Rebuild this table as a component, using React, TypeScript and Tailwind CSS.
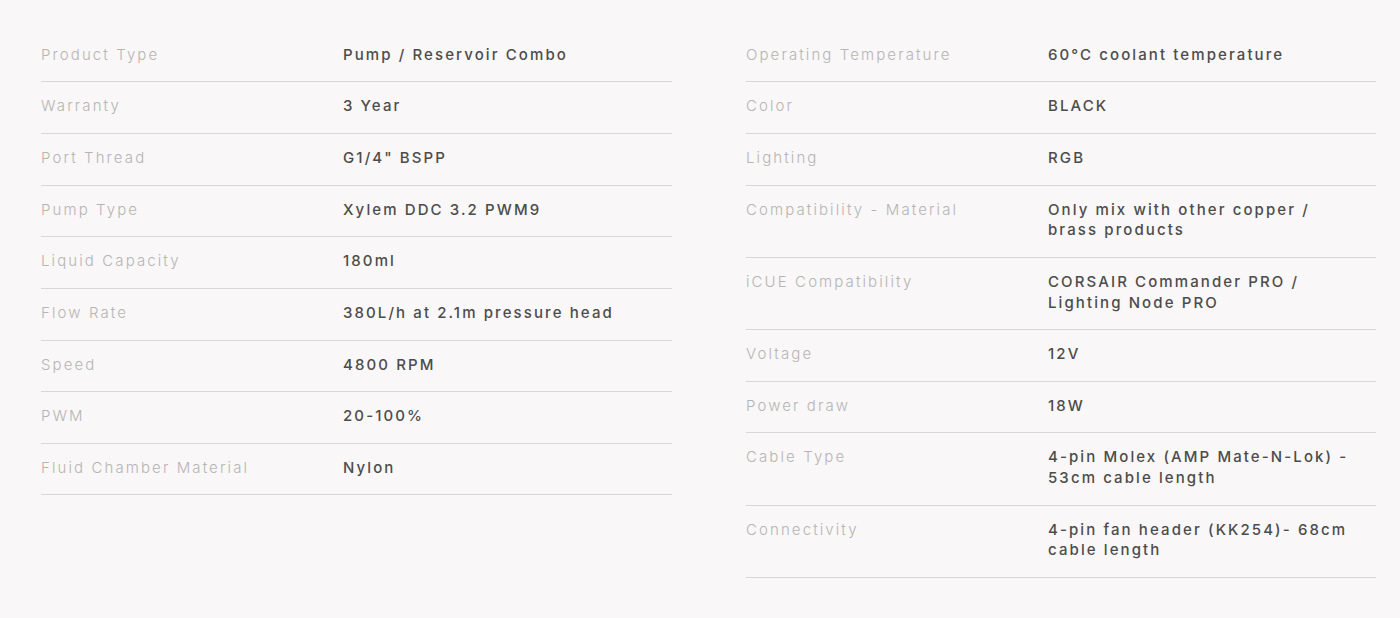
import React from 'react';

type Spec = {
  label: string;
  value: string;
};

const leftSpecs: Spec[] = [
  { label: 'Product Type', value: 'Pump / Reservoir Combo' },
  { label: 'Warranty', value: '3 Year' },
  { label: 'Port Thread', value: 'G1/4" BSPP' },
  { label: 'Pump Type', value: 'Xylem DDC 3.2 PWM9' },
  { label: 'Liquid Capacity', value: '180ml' },
  { label: 'Flow Rate', value: '380L/h at 2.1m pressure head' },
  { label: 'Speed', value: '4800 RPM' },
  { label: 'PWM', value: '20-100%' },
  { label: 'Fluid Chamber Material', value: 'Nylon' },
];

const rightSpecs: Spec[] = [
  { label: 'Operating Temperature', value: '60°C coolant temperature' },
  { label: 'Color', value: 'BLACK' },
  { label: 'Lighting', value: 'RGB' },
  { label: 'Compatibility - Material', value: 'Only mix with other copper / brass products' },
  { label: 'iCUE Compatibility', value: 'CORSAIR Commander PRO / Lighting Node PRO' },
  { label: 'Voltage', value: '12V' },
  { label: 'Power draw', value: '18W' },
  { label: 'Cable Type', value: '4-pin Molex (AMP Mate-N-Lok) - 53cm cable length' },
  { label: 'Connectivity', value: '4-pin fan header (KK254)- 68cm cable length' },
];

const SpecTable: React.FC<{ specs: Spec[]; className?: string }> = ({ specs, className = '' }) => (
  <div className={`flex flex-col ${className}`}>
    {specs.map((spec) => (
      <div
        key={spec.label}
        className="flex border-b border-[#d9d8d8] pt-[14px] pb-[16px] leading-[20.62px] text-[15px] tracking-[2.1px]"
      >
        <div className="w-[302px] shrink-0 font-light text-[#b6b5b5]">{spec.label}</div>
        <div className="w-[310px] font-medium text-[#4c4c4c]">{spec.value}</div>
      </div>
    ))}
  </div>
);

export default function App() {
  return (
    <div
      className="min-h-screen w-full bg-[#f9f7f7] pt-[30.8px]"
      style={{ fontFamily: 'Inter, "Noto Sans", sans-serif' }}
    >
      <div className="flex items-start pl-[41px]">
        <SpecTable specs={leftSpecs} className="w-[631px]" />
        <SpecTable specs={rightSpecs} className="ml-[74px] w-[630px]" />
      </div>
    </div>
  );
}
